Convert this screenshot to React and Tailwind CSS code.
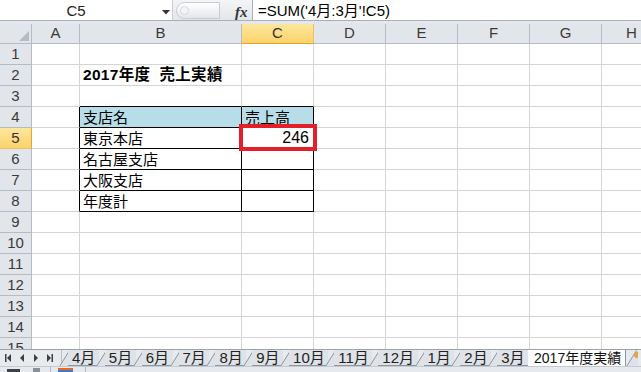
import React from "react";

const JP = { fontFamily: '"Liberation Sans", "Noto Sans CJK JP", sans-serif' };

const colDefs = [
  { k: "A", w: "w-[48px]" },
  { k: "B", w: "w-[162px]" },
  { k: "C", w: "w-[72px]" },
  { k: "D", w: "w-[72px]" },
  { k: "E", w: "w-[72px]" },
  { k: "F", w: "w-[72px]" },
  { k: "G", w: "w-[72px]" },
  { k: "H", w: "w-[60px]" },
];

const data = {
  "2B": { t: "2017年度\u00a0\u00a0売上実績", bold: true },
  "4B": { t: "支店名" },
  "4C": { t: "売上高" },
  "5B": { t: "東京本店" },
  "5C": { t: "246", right: true },
  "6B": { t: "名古屋支店" },
  "7B": { t: "大阪支店" },
  "8B": { t: "年度計" },
};

function Cell({ r, c, w }) {
  const inTable = r >= 4 && r <= 8 && (c === "B" || c === "C");
  const aboveTable = r === 3 && (c === "B" || c === "C");
  const leftTable = r >= 4 && r <= 8 && c === "A";
  const head = r === 4 && inTable;
  let cls = "relative shrink-0 h-full border-r border-b flex items-center ";
  if (inTable) cls += "border-r-black border-b-black ";
  else if (aboveTable) cls += "border-r-[#d4d4d4] border-b-black ";
  else if (leftTable) cls += "border-r-black border-b-[#d4d4d4] ";
  else cls += "border-[#d4d4d4] ";
  cls += head ? "bg-[#b7dee8] " : "bg-white ";
  const d = data[`${r}${c}`];
  return (
    <div className={cls + w}>
      {d && (
        <span
          className={
            "w-full whitespace-nowrap leading-none text-black " +
            (d.right ? "text-right pr-[4px] text-[16px] " : "pl-[3px] ") +
            (d.bold ? "font-bold text-[15.5px] tracking-[0.3px]" : "text-[15px]")
          }
          style={JP}
        >
          {d.t}
        </span>
      )}
      {r === 5 && c === "C" && (
        <div className="absolute left-[-3px] top-[-4px] w-[78px] h-[27px] border-4 border-[#e3202a] z-10" />
      )}
    </div>
  );
}

function NavIcons() {
  return (
    <svg width="56" height="12" viewBox="0 0 56 12" className="shrink-0">
      <g fill="#3b3f46">
        <rect x="4" y="2" width="1.5" height="8" />
        <polygon points="10,2 6,6 10,10" />
        <polygon points="23,2 19,6 23,10" />
        <polygon points="33,2 37,6 33,10" />
        <polygon points="46,2 50,6 46,10" />
        <rect x="50.5" y="2" width="1.5" height="8" />
      </g>
    </svg>
  );
}

function Slant() {
  return (
    <svg width="12" height="17" viewBox="0 0 12 17" className="shrink-0 -mx-[3px] block">
      <polygon points="0,17 10,0 12,0 12,17" fill="#dfe3e8" />
      <line x1="0.5" y1="16.5" x2="10.5" y2="0.5" stroke="#8d96a1" strokeWidth="1" />
    </svg>
  );
}

const tabs = ["4月", "5月", "6月", "7月", "8月", "9月", "10月", "11月", "12月", "1月", "2月", "3月"];

export default function App() {
  const rows = Array.from({ length: 15 }, (_, i) => i + 1);
  return (
    <div className="w-[641px] h-[372px] overflow-hidden flex flex-col bg-white" style={JP}>
      {/* formula bar */}
      <div className="h-[21px] shrink-0 flex border-b border-[#a9b0b8] bg-white">
        <div className="w-[172px] shrink-0 relative flex items-center justify-center">
          <span className="text-[15px] text-[#222] leading-none pr-[20px]" style={JP}>C5</span>
          <svg width="8" height="5" viewBox="0 0 8 5" className="absolute left-[162px] top-[10px]">
            <polygon points="0,0 8,0 4,4.5" fill="#333" />
          </svg>
        </div>
        <div className="w-[80px] shrink-0 flex items-center bg-linear-to-b from-[#f4f5f7] to-[#e3e6ea] border-l border-[#c9ced4] relative">
          <div className="ml-[3px] w-[44px] h-[17px] rounded-l-full bg-linear-to-b from-[#ffffff] to-[#e4e7eb] border border-[#c6ccd3] flex items-center">
            <div className="ml-[3px] w-[9px] h-[9px] rounded-full bg-[#f3f4f6] border border-[#d4d8dd]" />
          </div>
          <span
            className="absolute left-[62px] top-[1px] text-[15px] italic font-bold text-[#333]"
            style={{ fontFamily: '"Liberation Serif", serif' }}
          >
            fx
          </span>
        </div>
        <div className="flex-1 flex items-center border-l border-[#a9b0b8] pl-[5px]">
          <span className="text-[15px] text-black leading-none whitespace-nowrap" style={JP}>
            =SUM('4月:3月'!C5)
          </span>
        </div>
      </div>
      <div className="h-[3px] shrink-0 bg-[#e4e7eb]" />

      {/* grid */}
      <div className="flex-1 overflow-hidden flex flex-col">
        {/* column header */}
        <div className="h-[20px] shrink-0 flex">
          <div className="w-[32px] shrink-0 h-full border-r border-b border-[#b5bcc5] bg-[#e2e6eb] relative">
            <svg width="10" height="10" viewBox="0 0 10 10" className="absolute right-[2px] bottom-[2px]">
              <polygon points="10,0 10,10 0,10" fill="#b6bcc4" />
            </svg>
          </div>
          {colDefs.map((c) =>
            c.k === "C" ? (
              <div
                key={c.k}
                className={
                  "shrink-0 h-full border-r border-b border-r-[#e2c26a] border-b-[#f0a030] bg-linear-to-b from-[#fde79c] to-[#fbd36a] flex items-center justify-center text-[15px] text-[#333] " +
                  c.w
                }
              >
                {c.k}
              </div>
            ) : (
              <div
                key={c.k}
                className={
                  "shrink-0 h-full border-r border-b border-[#b5bcc5] bg-[#e2e6eb] flex items-center justify-center text-[15px] text-[#3a3a3a] " +
                  c.w
                }
              >
                {c.k}
              </div>
            )
          )}
        </div>
        {rows.map((r) => (
          <div key={r} className="h-[21px] shrink-0 flex">
            {r === 5 ? (
              <div className="w-[32px] shrink-0 h-full border-r border-b border-r-[#f0a030] border-b-[#e2c26a] bg-linear-to-b from-[#fde79c] to-[#fbd36a] flex items-center justify-center text-[15px] text-[#333]">
                {r}
              </div>
            ) : (
              <div className="w-[32px] shrink-0 h-full border-r border-b border-[#b5bcc5] bg-[#e2e6eb] flex items-center justify-center text-[15px] text-[#3a3a3a]">
                {r}
              </div>
            )}
            {colDefs.map((c) => (
              <Cell key={c.k} r={r} c={c.k} w={c.w} />
            ))}
          </div>
        ))}
      </div>

      {/* tab bar */}
      <div className="h-[17px] shrink-0 flex items-stretch bg-[#e8ebee] border-t border-[#9aa3ad]">
        <div className="w-[62px] shrink-0 flex items-center pl-[1px] border-r border-[#b9c0c8]">
          <NavIcons />
        </div>
        {tabs.map((t) => (
          <React.Fragment key={t}>
            <Slant />
            <div className="shrink-0 flex items-center pl-[4px] pr-[3.5px] bg-[#dfe3e8] text-[15px] leading-none text-[#222] border-b border-[#8d96a1]">
              {t}
            </div>
          </React.Fragment>
        ))}
        <div className="shrink-0 flex items-center pl-[6px] pr-[4px] bg-white text-[14px] leading-none text-[#111] border-r border-[#8d96a1]">
          2017年度実績
        </div>
        <svg width="12" height="17" viewBox="0 0 12 17" className="shrink-0 block">
          <polygon points="0,17 10,0 12,0 12,17" fill="#dfe3e8" />
          <line x1="0.5" y1="16.5" x2="10.5" y2="0.5" stroke="#8d96a1" strokeWidth="1" />
          <circle cx="11" cy="5" r="3" fill="#e8a33a" />
        </svg>
        <div className="flex-1" />
      </div>
      {/* status bar */}
      <div className="h-[6px] shrink-0 bg-[#e6e9ed] border-t border-[#c4cad2] flex items-end">
        <div className="w-[7px]" />
        <div className="w-[13px] h-[3px] bg-[#3d4249]" />
        <div className="w-[13px]" />
        <div className="w-[7px] h-[4px] bg-[#8a9099]" />
        <div className="w-[1px] h-full bg-[#b3bac3] ml-[10px]" />
        <div className="w-[15px] h-[4px] bg-[#4a78c0] ml-[7px] border-t-2 border-[#e06a2c]" />
        <div className="w-[1px] h-full bg-[#b3bac3] ml-[12px]" />
      </div>
    </div>
  );
}
